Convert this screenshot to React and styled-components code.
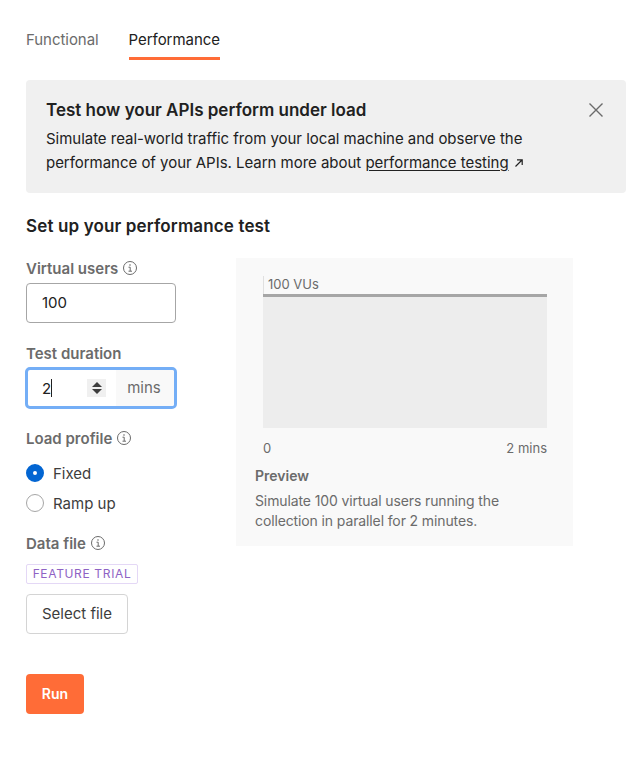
import React from "react";
import styled, { createGlobalStyle } from "styled-components";

const GlobalStyle = createGlobalStyle`
  html, body {
    margin: 0;
    padding: 0;
    background: #fff;
  }
  body {
    font-family: Inter, "Noto Sans", sans-serif;
    font-size: 15px;
    color: #212121;
  }
`;

const Page = styled.div`
  width: 600px;
  height: 771px;
  padding: 20px 0 0 26px;
  overflow: hidden;
`;

const Tabs = styled.div`
  display: flex;
  gap: 30px;
  height: 40px;
`;

const Tab = styled.div`
  height: 40px;
  box-sizing: border-box;
  padding-top: 10px;
  line-height: 20px;
  letter-spacing: -0.05px;
  color: ${(p) => (p.$active ? "#212121" : "#6b6b6b")};
  border-bottom: 3px solid ${(p) => (p.$active ? "#ff6c37" : "transparent")};
`;

const Banner = styled.section`
  position: relative;
  margin-top: 20px;
  height: 113px;
  box-sizing: border-box;
  padding: 18px 20px 0;
  background: #f0f0f0;
  border-radius: 4px;
`;

const BannerTitle = styled.h2`
  margin: 0 0 5px;
  font-size: 17px;
  line-height: 24px;
  font-weight: 600;
  color: #212121;
`;

const BannerText = styled.p`
  margin: 0;
  line-height: 24px;
  letter-spacing: -0.03px;
  color: #212121;
`;

const DocLink = styled.a`
  color: #212121;
  text-decoration: underline;
  text-underline-offset: 2px;
`;

const CloseButton = styled.button`
  position: absolute;
  top: 21px;
  right: 21px;
  width: 18px;
  height: 18px;
  padding: 0;
  border: 0;
  background: none;
  display: flex;
`;

const SectionTitle = styled.h3`
  margin: 21px 0 0;
  font-size: 17px;
  letter-spacing: 0.14px;
  line-height: 24px;
  font-weight: 600;
  color: #212121;
`;

const Columns = styled.div`
  display: flex;
  gap: 60px;
  margin-top: 20px;
  align-items: flex-start;
`;

const Form = styled.div`
  width: 150px;
  flex: none;
`;

const Label = styled.div`
  display: flex;
  align-items: center;
  gap: 4px;
  height: 20px;
  font-weight: 600;
  color: #6b6b6b;
  margin-top: ${(p) => p.$top || 0}px;
`;

const TextField = styled.div`
  box-sizing: border-box;
  margin-top: 5px;
  height: 40px;
  width: 150px;
  padding-left: 15px;
  line-height: 38px;
  border: 1px solid #a6a6a6;
  border-radius: 4px;
  color: #212121;
`;

const DurationField = styled.div`
  box-sizing: border-box;
  margin: 4px 0 0 -1px;
  height: 42px;
  width: 152px;
  display: flex;
  border: 3px solid #74aef6;
  border-radius: 5px;
  overflow: hidden;
`;

const DurationValue = styled.div`
  flex: 1;
  display: flex;
  align-items: center;
  padding-left: 14px;
  color: #212121;
`;

const Caret = styled.span`
  width: 1px;
  height: 18px;
  background: #212121;
`;

const Spinner = styled.div`
  margin-left: auto;
  margin-right: 10px;
  width: 19px;
  height: 18px;
  background: #f0f0f0;
  display: flex;
  align-items: center;
  justify-content: center;
`;

const Unit = styled.div`
  width: 58px;
  background: #f9f9f9;
  color: #6b6b6b;
  line-height: 36px;
  text-align: center;
  padding-right: 2px;
  box-sizing: border-box;
`;

const RadioRow = styled.div`
  display: flex;
  align-items: center;
  gap: 9px;
  height: 20px;
  margin-top: ${(p) => p.$top}px;
  color: #3d3d3d;
`;

const Radio = styled.span`
  box-sizing: border-box;
  width: 18px;
  height: 18px;
  border-radius: 50%;
  border: ${(p) => (p.$checked ? "7.5px solid #0265d2" : "1px solid #a6a6a6")};
  background: #fff;
`;

const Badge = styled.div`
  box-sizing: border-box;
  margin-top: 11px;
  width: 112px;
  height: 20px;
  border: 1px solid #e4d8f6;
  border-radius: 2px;
  font-size: 12px;
  line-height: 18px;
  letter-spacing: 0.65px;
  text-align: center;
  white-space: nowrap;
  color: #8e62c4;
`;

const FileButton = styled.button`
  display: block;
  box-sizing: border-box;
  margin-top: 10px;
  width: 102px;
  height: 40px;
  padding: 0 0 2px;
  background: #fff;
  border: 1px solid #d4d4d4;
  border-radius: 4px;
  font: inherit;
  color: #3d3d3d;
`;

const RunButton = styled.button`
  display: block;
  margin-top: 40px;
  width: 58px;
  height: 40px;
  padding: 0 0 2px;
  border: 0;
  background: #ff6c37;
  border-radius: 4px;
  font: inherit;
  font-size: 14px;
  font-weight: 600;
  color: #fff;
`;

const PreviewPanel = styled.aside`
  box-sizing: border-box;
  width: 337px;
  height: 288px;
  padding: 17px 19px 0;
  background: #f9f9f9;
  font-size: 14px;
`;

const Chart = styled.div`
  margin-left: 8px;
  width: 284px;
  font-size: 13px;
`;

const PeakLabel = styled.div`
  height: 18px;
  padding-left: 4px;
  margin-top: 1px;
  line-height: 16px;
  color: #6b6b6b;
  border-left: 1px solid #e0e0e0;
  box-sizing: border-box;
`;

const Plot = styled.div`
  height: 134px;
  box-sizing: border-box;
  background: #ededed;
  border-top: 3px solid #a6a6a6;
`;

const Axis = styled.div`
  display: flex;
  justify-content: space-between;
  margin-top: 10px;
  line-height: 20px;
  color: #6b6b6b;
`;

const PreviewTitle = styled.div`
  margin-top: 8px;
  line-height: 20px;
  font-weight: 600;
  color: #6b6b6b;
`;

const PreviewText = styled.p`
  margin: 5px 0 0;
  line-height: 20px;
  letter-spacing: -0.12px;
  color: #6b6b6b;
`;

const InfoIcon = () => (
  <svg width="16" height="16" viewBox="0 0 16 16" fill="none" stroke="#6b6b6b">
    <circle cx="8" cy="8" r="6.5" />
    <path d="M6.5 7.2H8.2V11M6.5 11.2H10" />
    <circle cx="8" cy="5" r="0.8" fill="#6b6b6b" stroke="none" />
  </svg>
);

const CloseIcon = () => (
  <svg width="18" height="18" viewBox="0 0 18 18" fill="none" stroke="#6b6b6b" strokeWidth="1.4">
    <path d="M2.5 2.5L15.5 15.5M15.5 2.5L2.5 15.5" />
  </svg>
);

const ExternalIcon = () => (
  <svg width="10" height="10" viewBox="0 0 10 10" fill="none" stroke="#212121" strokeWidth="1.2" style={{ marginLeft: 5 }}>
    <path d="M1.5 8.5L8 2M3 1.8H8.2V7" />
  </svg>
);

const SpinnerIcon = () => (
  <svg width="12" height="14" viewBox="0 0 12 14" fill="#3d3d3d">
    <path d="M6 1L11 6H1Z" />
    <path d="M6 13L1 8H11Z" />
  </svg>
);

export default function App() {
  return (
    <Page>
      <GlobalStyle />
      <Tabs>
        <Tab>Functional</Tab>
        <Tab $active>Performance</Tab>
      </Tabs>

      <Banner>
        <BannerTitle>Test how your APIs perform under load</BannerTitle>
        <BannerText>
          Simulate real-world traffic from your local machine and observe the
          <br />
          performance of your APIs. Learn more about <DocLink>performance testing</DocLink>
          <ExternalIcon />
        </BannerText>
        <CloseButton>
          <CloseIcon />
        </CloseButton>
      </Banner>

      <SectionTitle>Set up your performance test</SectionTitle>

      <Columns>
        <Form>
          <Label>
            Virtual users <InfoIcon />
          </Label>
          <TextField>100</TextField>

          <Label $top={20}>Test duration</Label>
          <DurationField>
            <DurationValue>
              2<Caret />
              <Spinner>
                <SpinnerIcon />
              </Spinner>
            </DurationValue>
            <Unit>mins</Unit>
          </DurationField>

          <Label $top={19}>
            Load profile <InfoIcon />
          </Label>
          <RadioRow $top={15}>
            <Radio $checked />
            Fixed
          </RadioRow>
          <RadioRow $top={10}>
            <Radio />
            Ramp up
          </RadioRow>

          <Label $top={20}>
            Data file <InfoIcon />
          </Label>
          <Badge>FEATURE TRIAL</Badge>
          <FileButton>Select file</FileButton>
          <RunButton>Run</RunButton>
        </Form>

        <PreviewPanel>
          <Chart>
            <PeakLabel>100 VUs</PeakLabel>
            <Plot />
            <Axis>
              <span>0</span>
              <span>2 mins</span>
            </Axis>
          </Chart>
          <PreviewTitle>Preview</PreviewTitle>
          <PreviewText>
            Simulate 100 virtual users running the
            <br />
            collection in parallel for 2 minutes.
          </PreviewText>
        </PreviewPanel>
      </Columns>
    </Page>
  );
}
